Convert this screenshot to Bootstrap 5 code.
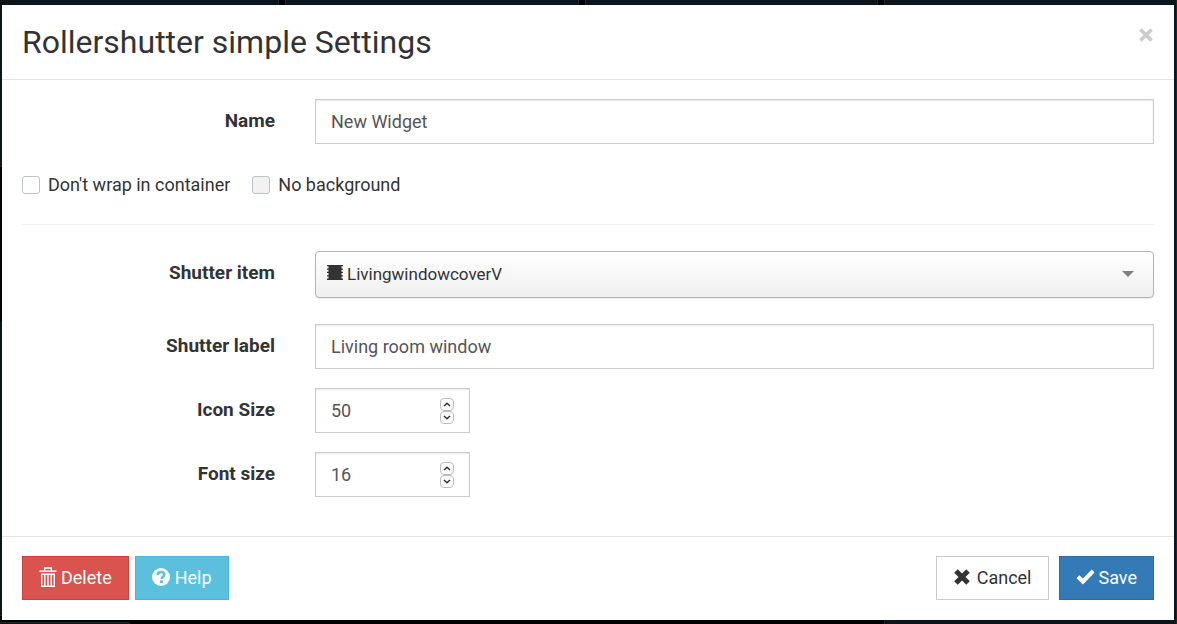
<!DOCTYPE html>
<html lang="en">
<head>
<meta charset="utf-8">
<meta name="viewport" content="width=device-width, initial-scale=1">
<title>Rollershutter simple Settings</title>
<link href="https://cdn.jsdelivr.net/npm/bootstrap@5.3.0/dist/css/bootstrap.min.css" rel="stylesheet">
<style>
  body { background: #000; color: #333; font: 18px/26px Roboto, "Liberation Sans", sans-serif; }
  /* dashboard tiles behind the dialog */
  .dashboard { position: fixed; inset: 0 0 0 -14px; display: grid; grid-template-columns: repeat(4, 1fr); column-gap: 6px; overflow: hidden; }
  .tile { background: #0d151c; border: 1px solid #1c262e; border-top: 0; }
  .tile-short { height: 167px; }
  .tile-mid { height: 294px; margin-top: 155px; }
  .tile-low { height: 30px; width: 144px; margin-top: 6px; border-top: 1px solid #1c262e; }
  .settings { position: relative; margin: 5px 3px 4px 2px; background: #fff; }
  .settings-head { padding: 15px 20px 15px; border-bottom: 1px solid #e5e5e5; }
  .settings-head h1 { font-size: 32px; line-height: 44px; font-weight: 400; }
  .dismiss { border: 0; background: none; padding: 0; width: 16px; height: 30px; line-height: 0; }
  .settings-body { padding: 19px 20px 39px; }
  .settings-body .row { --bs-gutter-x: 40px; }
  .field-row { margin-bottom: 19px; }
  .field-label { font-size: 19px; font-weight: 700; text-align: right; padding-top: 9px; }
  .field { border: 1px solid #ccc; border-radius: 0; background: #fff; color: #555; box-shadow: inset 0 1px 2px rgba(0,0,0,.1); }
  .form-control.field { font-size: 18px; line-height: 27px; padding: 8px 15px; }
  .options { column-gap: 22px; padding-top: 9px; }
  .tick { width: 18px; height: 18px; margin: 0; border: 1px solid #bcc2ca; border-radius: 3px; background-color: #fff; }
  .tick[type=checkbox] { border-radius: 3px; }
  .tick:disabled { background-color: #f2f2f2; opacity: 1; }
  .tick:disabled ~ label { opacity: 1; }
  .divider { margin: 26px 0; border: 0; border-top: 1px solid #eee; opacity: 1; }
  .item-row { margin-bottom: 26px; }
  .item-picker { position: relative; }
  .item-picker select { height: 47px; font-size: 17px; color: #333; padding: 0 40px 0 31px; border: 1px solid #b3b3b3; border-radius: 4px; box-shadow: 0 1px 1px rgba(0,0,0,.08);
    background: linear-gradient(#fff, #efefef); }
  .item-picker svg { position: absolute; pointer-events: none; }
  .item-picker .shutter { left: 12px; top: 14px; }
  .item-picker .caret { right: 20px; top: 20px; }
  .number-field { padding: 0 15px; }
  .number-field input { min-width: 0; flex: 1; border: 0; padding: 8px 0; line-height: 27px; color: #555; background: none; appearance: textfield; outline: 0; }
  .number-field input::-webkit-inner-spin-button { appearance: none; margin: 0; }
  .step { display: block; width: 14px; height: 13px; padding: 0; border: 1px solid #b9bdc6; border-radius: 4px; background: #fff; line-height: 0; }
  .settings-foot { padding: 19px 20px 20px; border-top: 1px solid #e5e5e5; column-gap: 6px; }
  .act { --bs-btn-font-size: 18px; --bs-btn-line-height: 26px; --bs-btn-padding-x: 16px; --bs-btn-padding-y: 8px; --bs-btn-border-radius: 0; --bs-btn-color: #fff; display: flex; align-items: center; gap: 4px; }
  .act svg { flex: none; margin-bottom: 3px; }
  .act-delete { --bs-btn-bg: #d9534f; --bs-btn-border-color: #d43f3a; }
  .act-help { --bs-btn-bg: #5bc0de; --bs-btn-border-color: #46b8da; }
  .act-cancel { --bs-btn-bg: #fff; --bs-btn-border-color: #ccc; --bs-btn-color: #333; }
  .act-save { --bs-btn-bg: #337ab7; --bs-btn-border-color: #2e6da4; }
</style>
</head>
<body>
<div class="dashboard" aria-hidden="true">
  <div><div class="tile tile-short"></div><div class="tile tile-mid"></div><div class="tile tile-low"></div></div>
  <div class="tile tile-short"></div><div class="tile tile-short"></div><div class="tile"></div>
</div>
<form class="settings" role="dialog" aria-labelledby="dialog-title">
  <header class="settings-head d-flex justify-content-between align-items-start">
    <h1 id="dialog-title" class="m-0">Rollershutter simple Settings</h1>
    <button type="button" class="dismiss" aria-label="Close">
      <svg width="14" height="14" viewBox="0 0 14 14" stroke="#ccc" stroke-width="3.6"><path d="M1.4 1.4 12.6 12.6M12.6 1.4 1.4 12.6"/></svg>
    </button>
  </header>
  <div class="settings-body">
    <div class="row field-row">
      <label class="col-3 field-label" for="name">Name</label>
      <div class="col-9"><input id="name" type="text" class="form-control field" value="New Widget"></div>
    </div>
    <div class="d-flex options">
      <div class="d-flex align-items-center gap-2"><input id="wrap" type="checkbox" class="form-check-input tick"><label for="wrap">Don't wrap in container</label></div>
      <div class="d-flex align-items-center gap-2"><input id="nobg" type="checkbox" class="form-check-input tick" disabled><label for="nobg">No background</label></div>
    </div>
    <hr class="divider">
    <div class="row item-row">
      <label class="col-3 field-label" for="item">Shutter item</label>
      <div class="col-9">
        <div class="item-picker">
          <select id="item" class="form-select"><option>LivingwindowcoverV</option></select>
          <svg class="shutter" width="16" height="15" viewBox="0 0 16 15" fill="#333"><path d="M1.5 0h13v15h-13zM0 0h16v1.3H0zM0 3.4h16v1.3H0zM0 6.8h16v1.3H0zM0 10.2h16v1.3H0zM0 13.6h16V15H0z"/></svg>
          <svg class="caret" width="12" height="6" viewBox="0 0 12 6" fill="#808080"><path d="M0 0h12L6 6z"/></svg>
        </div>
      </div>
    </div>
    <div class="row field-row">
      <label class="col-3 field-label" for="label">Shutter label</label>
      <div class="col-9"><input id="label" type="text" class="form-control field" value="Living room window"></div>
    </div>
    <div class="row field-row">
      <label class="col-3 field-label" for="icon-size">Icon Size</label>
      <div class="col-2"><div class="field number-field d-flex align-items-center">
        <input id="icon-size" type="number" value="50">
        <div><button type="button" class="step" aria-label="Increase icon size"><svg width="8" height="5" viewBox="0 0 8 5" fill="none" stroke="#333" stroke-width="1.5"><path d="M1 4 4 1.3 7 4"/></svg></button><button type="button" class="step" aria-label="Decrease icon size"><svg width="8" height="5" viewBox="0 0 8 5" fill="none" stroke="#333" stroke-width="1.5"><path d="M1 1 4 3.7 7 1"/></svg></button></div>
      </div></div>
    </div>
    <div class="row">
      <label class="col-3 field-label" for="font-size">Font size</label>
      <div class="col-2"><div class="field number-field d-flex align-items-center">
        <input id="font-size" type="number" value="16">
        <div><button type="button" class="step" aria-label="Increase font size"><svg width="8" height="5" viewBox="0 0 8 5" fill="none" stroke="#333" stroke-width="1.5"><path d="M1 4 4 1.3 7 4"/></svg></button><button type="button" class="step" aria-label="Decrease font size"><svg width="8" height="5" viewBox="0 0 8 5" fill="none" stroke="#333" stroke-width="1.5"><path d="M1 1 4 3.7 7 1"/></svg></button></div>
      </div></div>
    </div>
  </div>
  <footer class="settings-foot d-flex">
    <button type="button" class="btn act act-delete"><svg width="18" height="20" viewBox="0 0 18 20" fill="none" stroke="#fff" stroke-width="1.4"><path d="M.5 4.3h17M5.7 4V1h6.6v3M2.2 7.2h13.6M2.7 7v12.2h12.6V7M5.8 7v12M9 7v12M12.2 7v12"/></svg>Delete</button>
    <button type="button" class="btn act act-help me-auto"><svg width="19" height="18" viewBox="0 0 19 18"><circle cx="9" cy="9" r="9" fill="#fff"/><path d="M5.7 7.2C5.7 5 7 4 9 4s3.3 1 3.3 2.7c0 2-2.7 1.9-2.7 4.3" fill="none" stroke="#5bc0de" stroke-width="2.5"/><path d="M8 12.4h3v2.6H8z" fill="#5bc0de"/></svg>Help</button>
    <button type="button" class="btn act act-cancel me-1"><svg width="20" height="16" viewBox="0 0 20 16" stroke="#333" stroke-width="5"><path d="M3 2 15 14M15 2 3 14"/></svg>Cancel</button>
    <button type="submit" class="btn act act-save"><svg width="19" height="16" viewBox="0 0 19 16" fill="#fff"><path d="M15.7.5 18.6 3.4 7 15.5.5 9.2 3.4 6.2 7 9.6z"/></svg>Save</button>
  </footer>
</form>
<script src="https://cdn.jsdelivr.net/npm/bootstrap@5.3.0/dist/js/bootstrap.bundle.min.js"></script>
</body>
</html>
